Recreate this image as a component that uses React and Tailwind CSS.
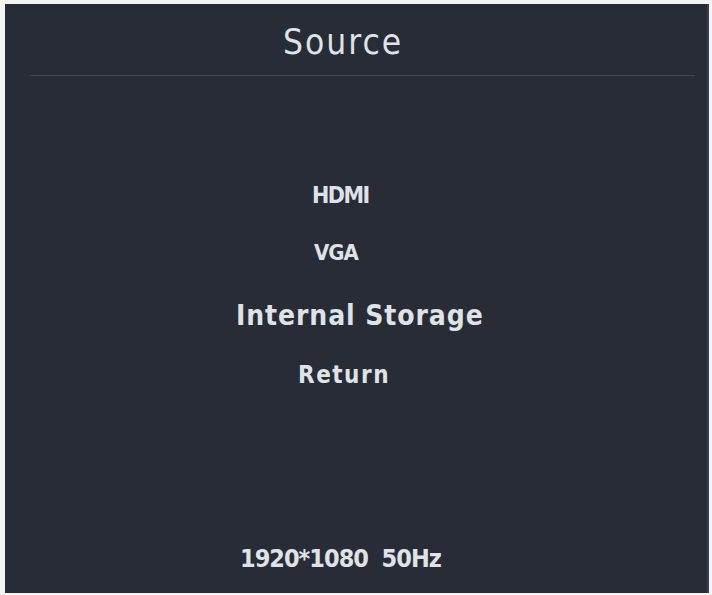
import React from 'react'

const OSD_FONT = { fontFamily: '"DejaVu Sans Condensed", "DejaVu Sans", "Liberation Sans", sans-serif' }

// OSD source menu entries, each with its own left inset like the monitor firmware draws them
const ITEMS = [
  { label: 'HDMI', cls: 'h-[58px] pl-[307px] text-[23px] font-bold tracking-[-1.5px]' },
  { label: 'VGA', cls: 'h-[63px] pl-[309px] text-[22px] font-bold tracking-[-1px]' },
  { label: 'Internal Storage', cls: 'h-[59px] pl-[231px] text-[28px] font-bold tracking-[0.9px]' },
  { label: 'Return', cls: 'h-[60px] pl-[293px] text-[24px] font-bold tracking-[1.5px]' },
]

export default function App() {
  return (
    <div className="w-[712px] h-[595px] bg-[#f4f4f4] pt-[4px] pl-[5px] pr-[3px] pb-[2px]" style={OSD_FONT}>
      <div className="h-full bg-[#272c36] flex flex-col text-[#dfe2e6] border-r-2 border-[#3a3e4a]">
        {/* title bar */}
        <div className="h-[71px] pl-[278px] pt-[16px] text-[35px] leading-[44px] tracking-[2px]">Source</div>
        <div className="ml-[25px] mr-[12px] h-px bg-[#3f4650]" />

        <div className="h-[90px]" />
        {ITEMS.map(it => (
          <div key={it.label} className={`${it.cls} leading-[58px]`}>{it.label}</div>
        ))}

        <div className="flex-1" />
        <div className="h-[54px] pl-[235px] text-[25px] font-bold tracking-[-1px] leading-[40px] whitespace-pre">1920*1080  50Hz</div>
      </div>
    </div>
  )
}
